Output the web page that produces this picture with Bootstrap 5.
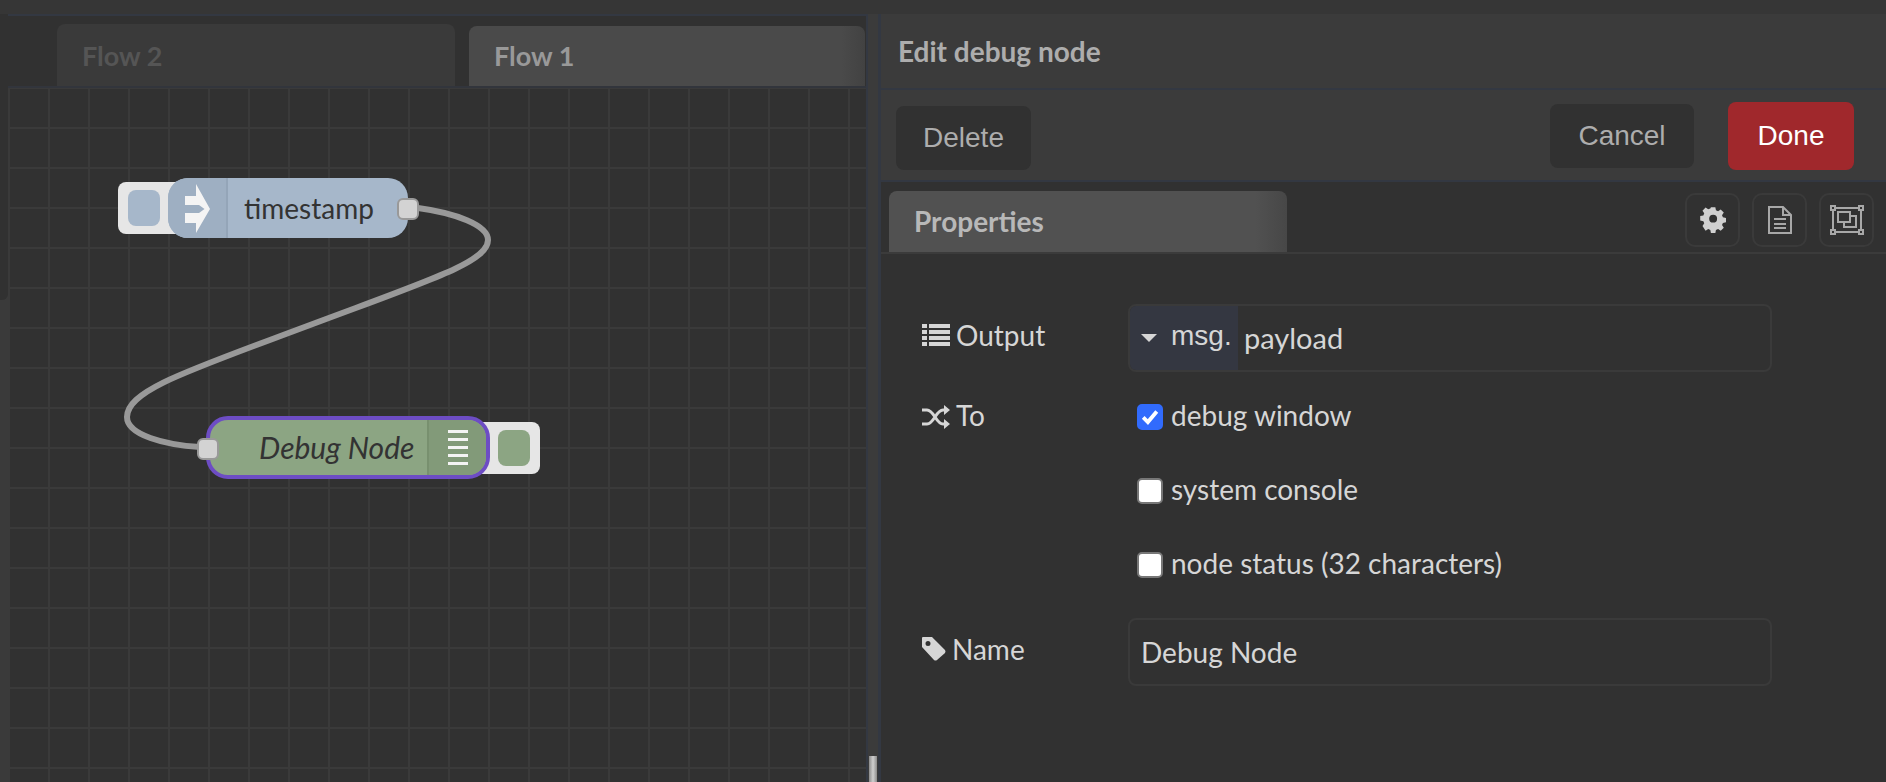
<!DOCTYPE html>
<html lang="en">
<head>
<meta charset="utf-8">
<title>Edit debug node</title>
<link rel="stylesheet" href="https://cdn.jsdelivr.net/npm/bootstrap@5.3.0/dist/css/bootstrap.min.css">
<style>
html,body{height:100%;overflow:hidden}
body{background:#313131;color:#d6d6d6;font-family:"Lato","Liberation Sans",sans-serif}
.top-strip{height:14px;background:#363636}
.main-row{height:768px}
.canvas-col{width:866px;background:#3a3a3a}
.edge-strip{width:8px;flex:none}
.edge-fill{height:286px;background:#313131;border-radius:0 0 6px 0}
.canvas-main{flex:1;background:#313131;border-top:2px solid #333842;min-width:0}
.tab-strip{height:72px;padding-left:49px;gap:14px;border-bottom:2px solid #32353c}
.flow-tab{width:398px;margin-top:8px;padding:16px 0 0 25px;font-size:27px;font-weight:700;line-height:32px;border-radius:8px 8px 0 0}
.flow-off{background:#3a3a3a;color:#555}
.flow-on{background:linear-gradient(90deg,#4a4a4a 94%,#424242);color:#999;margin-top:10px;padding-top:14px;width:396px}
.grid-area{position:relative;height:694px;background-image:linear-gradient(#3a3a3a 2px,transparent 2px),linear-gradient(90deg,#3a3a3a 2px,transparent 2px);background-size:40px 40px;background-position:0 39px,0 0}
.wire-svg{position:absolute;left:-8px;top:-88px;width:866px;height:782px}
.flow-node{position:absolute;border-radius:20px;display:flex;align-items:center;color:#333}
.node-ts{left:160px;top:90px;width:240px;height:60px;background:#a6b7ca;font-size:28px}
.node-dbg{left:198px;top:328px;width:284px;height:63px;background:#8ca583;border:4px solid #6d4dc4;border-radius:22px;font-style:italic;font-size:30px}
.node-btn{position:absolute;background:#e6e6e6;display:flex;align-items:center;justify-content:center}
.btn-left{left:110px;top:94px;width:60px;height:52px;border-radius:8px 0 0 8px;justify-content:flex-start;padding-left:10px}
.btn-right{left:474px;top:334px;width:58px;height:52px;border-radius:0 8px 8px 0;justify-content:flex-end;padding-right:10px}
.btn-core{width:32px;height:36px;border-radius:8px}
.core-blue{background:#a6b7ca}
.core-green{background:#8ca583}
.node-port{position:absolute;width:22px;height:22px;background:#d3d3d3;border:2px solid #999;border-radius:6px}
.port-out{left:389px;top:110px}
.port-in{left:189px;top:350px}
.icon-left{width:60px;height:100%;background:#9eafc2;border-right:2px solid #94a5b8;border-radius:20px 0 0 20px;display:flex;align-items:center;justify-content:center;flex:none}
.icon-right{width:59px;height:100%;background:#829a79;border-left:2px solid #78906f;display:flex;align-items:center;justify-content:center;flex:none;border-radius:0 18px 18px 0}
.ts-label{padding-left:16px}
.dbg-label{padding-left:49px}
.gutter-col{width:12px;background:#3b3b3b;position:relative;border-left:2px solid #333842}
.thumb{position:absolute;left:1px;bottom:0;width:8px;height:26px;background:linear-gradient(90deg,#8b8b8b,#cfcfcf,#8b8b8b)}
.side-col{flex:1;border-left:3px solid #333842;min-width:0}
.side-head{height:76px;background:#3b3b3b;padding-left:17px;font-size:28px;font-weight:700;color:#adadad;border-bottom:2px solid #333842}
.side-actions{height:92px;background:#3b3b3b;padding:2px 32px 0 15px;border-bottom:2px solid #333842}
.act-btn{border-radius:8px;font:28px "Liberation Sans",sans-serif;border:0;padding:0}
.act-del{width:135px;height:64px;background:#313131;color:#adadad;margin-top:4px}
.act-can{width:144px;height:64px;background:#313131;color:#adadad;margin-right:34px}
.act-done{width:126px;height:68px;background:#a0282c;color:#fff}
.prop-tabs{height:72px;padding:0 12px 0 8px;border-bottom:2px solid #3b3b3b}
.prop-tab{width:398px;height:61px;margin-top:9px;padding-left:25px;background:linear-gradient(90deg,#515151 92%,#474747);color:#b8b8b8;font-size:28px;font-weight:700;border-radius:8px 8px 0 0;line-height:60px}
.tool-group{gap:12px;margin-top:11px}
.tool-box{width:55px;height:54px;border:2px solid #3a3a3a;border-radius:10px;display:flex;align-items:center;justify-content:center}
.form-area{padding:50px 0 0 41px}
.field-row{display:flex}
.field-label{width:206px;flex:none;font-size:28px;display:flex;align-items:center;gap:6px;padding-bottom:6px}
.to-label{height:26px;padding-bottom:0}
.to-label span{margin-top:-4px}
.check-wrap{margin-top:32px}
.name-row{margin-top:40px}
.field-input{width:644px;height:68px;border:2px solid #3a3a3a;border-radius:8px;display:flex;align-items:stretch;font-size:28px;overflow:hidden}
.msg-box{width:108px;background:#343741;display:flex;align-items:center;font-family:"Liberation Sans",sans-serif;padding-left:11px;gap:14px;flex:none;font-size:28px;padding-bottom:4px}
.caret-tri{width:0;height:0;border-left:8px solid transparent;border-right:8px solid transparent;border-top:8px solid #d6d6d6;margin-top:3px}
.payload-text{padding-left:6px;line-height:64px;font-size:29px}
.name-text{padding-left:11px;line-height:64px}
.check-col{padding-left:9px;gap:48px}
.check-line{height:26px;display:flex;align-items:center;gap:8px;font-size:28px;white-space:nowrap}
.check-line span{margin-top:-4px}
.check-line .form-check-input{width:26px;height:26px;margin:0;flex:none;border:2px solid #777;border-radius:5px}
.check-line .form-check-input:checked{border-color:#316bfd;background-color:#316bfd;background-size:100% 100%;background-image:url("data:image/svg+xml,%3csvg xmlns='http://www.w3.org/2000/svg' viewBox='0 0 26 26'%3e%3cpath fill='none' stroke='%23fff' stroke-width='4.500' d='M5 13.500l5.500 5.500L21 6.500'/%3e%3c/svg%3e")}
</style>
</head>
<body>
<div class="top-strip"></div>
<div class="main-row d-flex">
  <div class="canvas-col d-flex">
    <div class="edge-strip"><div class="edge-fill"></div></div>
    <div class="canvas-main">
      <div class="tab-strip d-flex">
        <div class="flow-tab flow-off">Flow 2</div>
        <div class="flow-tab flow-on">Flow 1</div>
      </div>
      <div class="grid-area">
        <svg class="wire-svg" viewBox="0 0 866 782" aria-hidden="true"><path d="M418 208C455 213 488 225 488 240C488 262 430 280 310 325C190 370 127 390 127 417C127 435 165 445 200 447" fill="none" stroke="#999" stroke-width="6"/></svg>
        <div class="node-btn btn-left"><div class="btn-core core-blue"></div></div>
        <div class="flow-node node-ts">
          <div class="icon-left"><svg width="25" height="49" viewBox="0 0 25 49"><path d="M11 0L25 25L11 49V39H0V29H14L19.500 25L14 21H0V12H11Z" fill="#f4f4f4"/></svg></div>
          <div class="ts-label">timestamp</div>
        </div>
        <div class="node-port port-out"></div>
        <div class="node-btn btn-right"><div class="btn-core core-green"></div></div>
        <div class="flow-node node-dbg">
          <div class="dbg-label flex-grow-1">Debug Node</div>
          <div class="icon-right"><svg width="20" height="36" viewBox="0 0 20 36"><path d="M0 1.500H20M0 9.500H20M0 17.500H20M0 25.500H20M0 33.500H20" stroke="#f4f4f4" stroke-width="3"/></svg></div>
        </div>
        <div class="node-port port-in"></div>
      </div>
    </div>
  </div>
  <div class="gutter-col"><div class="thumb"></div></div>
  <div class="side-col">
    <div class="side-head d-flex align-items-center">Edit debug node</div>
    <div class="side-actions d-flex align-items-center">
      <button type="button" class="act-btn act-del">Delete</button>
      <span class="flex-grow-1"></span>
      <button type="button" class="act-btn act-can">Cancel</button>
      <button type="button" class="act-btn act-done">Done</button>
    </div>
    <div class="prop-tabs d-flex">
      <div class="prop-tab">Properties</div>
      <div class="d-flex ms-auto align-items-start tool-group">
        <div class="tool-box"><svg width="26" height="26" viewBox="0 0 26 26"><path fill="#d0d0d0" fill-rule="evenodd" d="M10.500 0h5l.7 3.600 2.400 1 3-2 3.500 3.500-2 3 1 2.400 3.600.7v5l-3.600.7-1 2.400 2 3-3.500 3.500-3-2-2.400 1-.7 3.600h-5l-.7-3.600-2.400-1-3 2L.9 21.300l2-3-1-2.400L-1.700 15v-5l3.600-.7 1-2.400-2-3L4.400 .4l3 2 2.400-1zM13 8.500a4.500 4.500 0 1 0 0 9 4.500 4.500 0 0 0 0-9z" transform="translate(1.700 .2) scale(.88)"/></svg></div>
        <div class="tool-box"><svg width="26" height="28" viewBox="0 0 26 28" fill="none" stroke="#a8a8a8" stroke-width="2"><path d="M2 1H16L24 9V27H2ZM16 1V9H24M7 13H19M7 18H19M7 22H19"/></svg></div>
        <div class="tool-box"><svg width="34" height="30" viewBox="0 0 34 30" fill="none" stroke="#a8a8a8" stroke-width="2"><path d="M5 3H29M5 27H29M3 5V25M31 5V25"/><path d="M1 1H5V5H1ZM29 1H33V5H29ZM1 25H5V29H1ZM29 25H33V29H29Z"/><path d="M8 7H20V17H8ZM14 17V22H26V11H20"/></svg></div>
      </div>
    </div>
    <div class="form-area">
      <div class="field-row">
        <div class="field-label"><svg width="28" height="22" viewBox="0 0 28 22"><path fill="#d6d6d6" d="M0 0h5v4H0zM7 0h21v4H7zM0 6h5v4H0zM7 6h21v4H7zM0 12h5v4H0zM7 12h21v4H7zM0 18h5v4H0zM7 18h21v4H7z"/></svg><span>Output</span></div>
        <div class="field-input"><div class="msg-box"><span class="caret-tri"></span><span>msg.</span></div><div class="payload-text">payload</div></div>
      </div>
      <div class="field-row check-wrap">
        <div class="field-label to-label"><svg width="28" height="24" viewBox="0 0 28 24" fill="none" stroke="#d6d6d6" stroke-width="3"><path d="M0 5H5C12 5 14 19 21 19H25M0 19H5C12 19 14 5 21 5H25"/><path fill="#d6d6d6" stroke="none" d="M22 0L28 5L22 10ZM22 14L28 19L22 24Z"/></svg><span>To</span></div>
        <div class="d-flex flex-column check-col">
          <label class="check-line"><input class="form-check-input" type="checkbox" checked><span>debug window</span></label>
          <label class="check-line"><input class="form-check-input" type="checkbox"><span>system console</span></label>
          <label class="check-line"><input class="form-check-input" type="checkbox"><span>node status (32 characters)</span></label>
        </div>
      </div>
      <div class="field-row name-row">
        <div class="field-label"><svg width="24" height="24" viewBox="0 0 24 24"><path fill="#d6d6d6" fill-rule="evenodd" d="M1 0H10L23 13Q24 14.500 23 16L15 23Q13.500 24 12 23L0 10V1Q0 0 1 0ZM6 4A2.500 2.500 0 1 0 6 9A2.500 2.500 0 1 0 6 4Z"/></svg><span>Name</span></div>
        <div class="field-input"><div class="name-text">Debug Node</div></div>
      </div>
    </div>
  </div>
</div>
</body>
</html>
